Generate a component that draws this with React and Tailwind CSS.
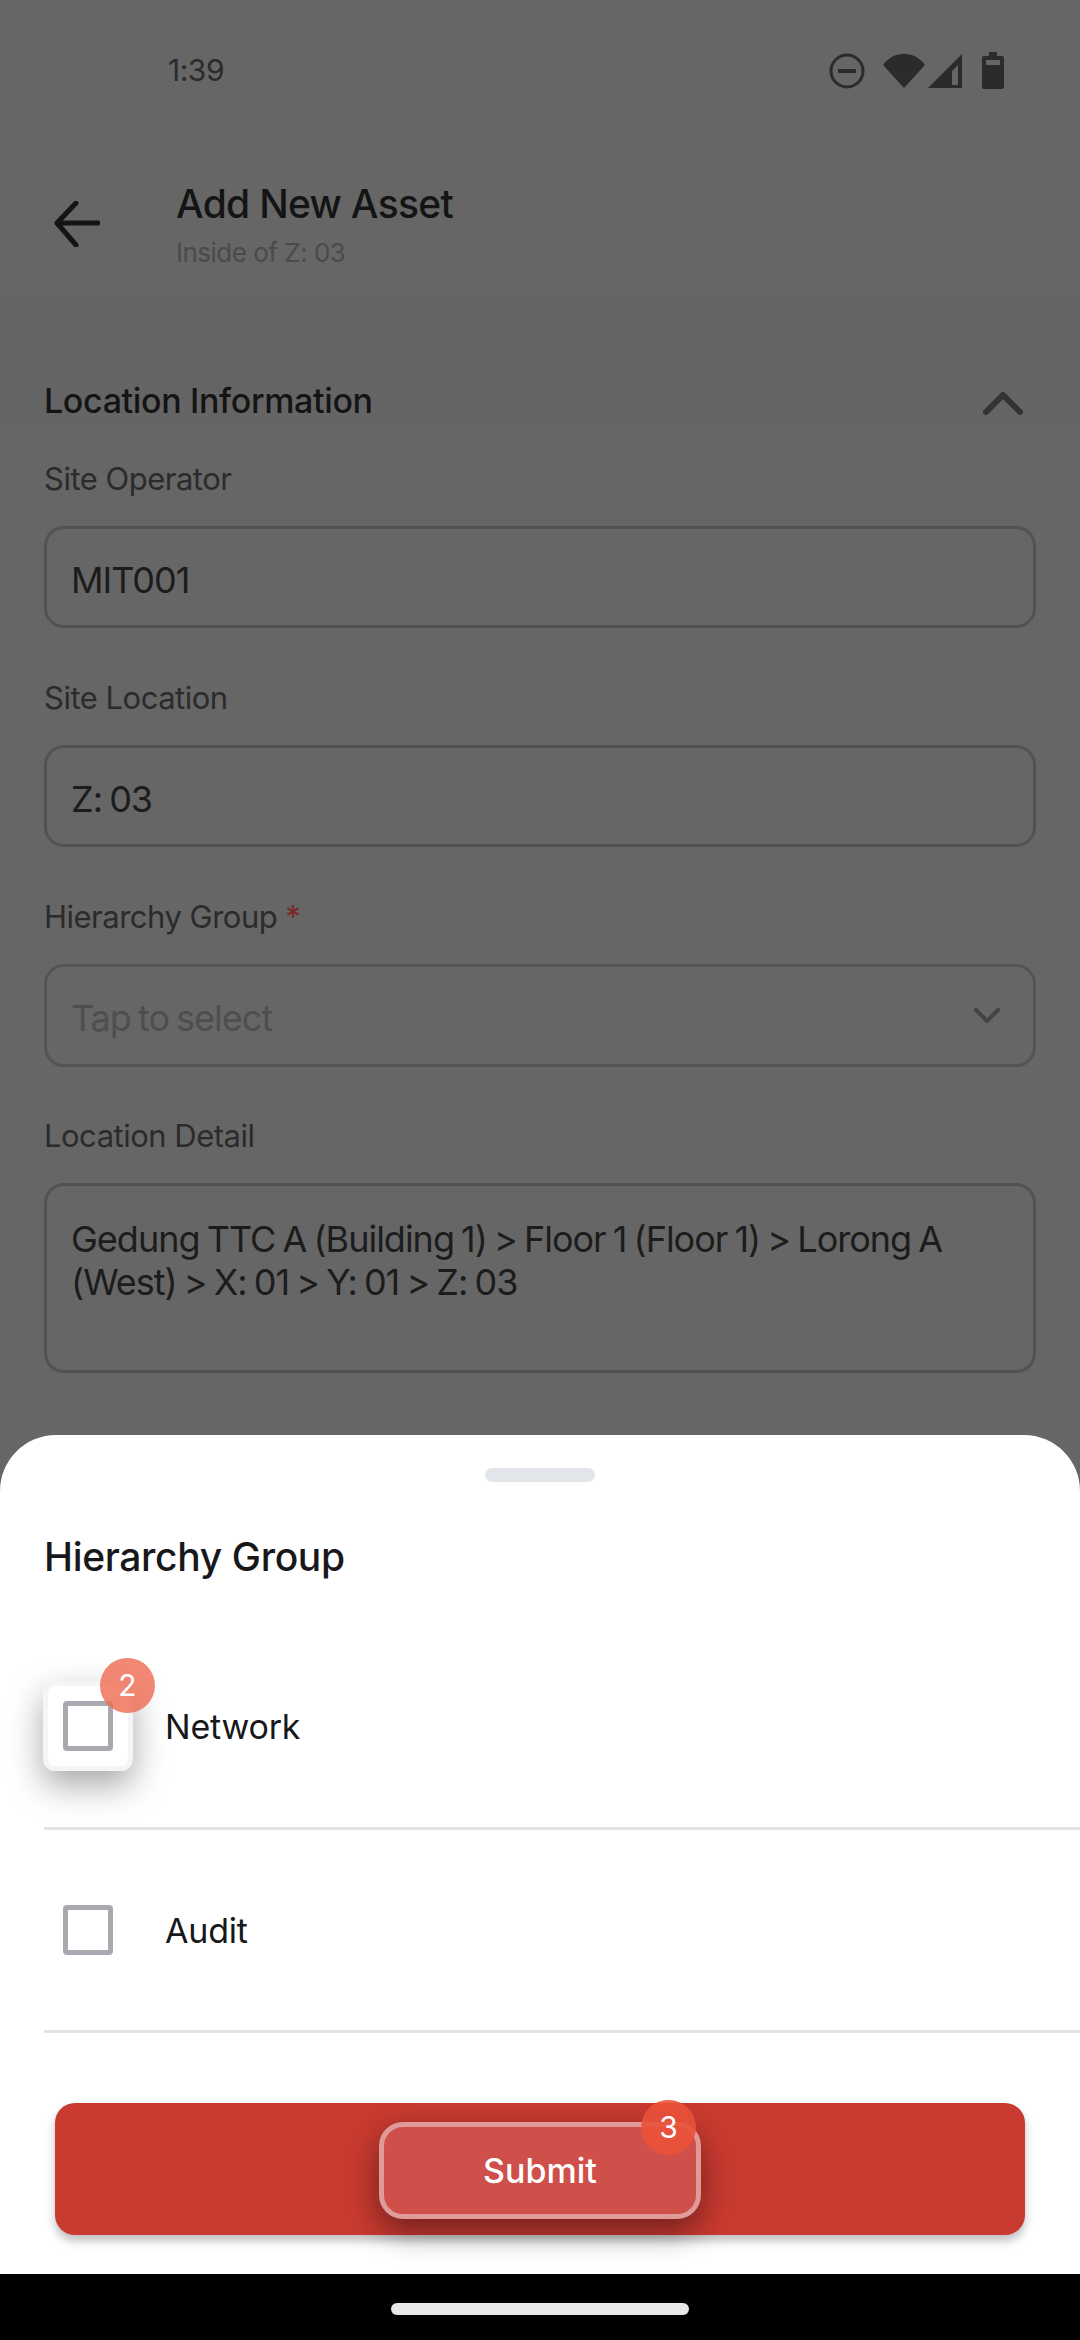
import React from "react";

const Label = ({ children, required }) => (
    <div className="h-[44px] flex items-center text-[31px] leading-none tracking-[-0.5px] text-[#2b2b2b]">
        {children}
        {required && <span className="ml-2 text-[#7a2a24]">*</span>}
    </div>
);

const Field = ({ label, value }) => (
    <div className="mb-[47px]">
        <Label>{label}</Label>
        <div className="mt-[26px] h-[102px] rounded-[20px] border-[3px] border-[#525252] px-[24px] pt-[5px] flex items-center text-[36px] tracking-[-1px] [word-spacing:-2px] text-[#1c1c1c]">
            {value}
        </div>
    </div>
);

function StatusBar() {
    return (
        <div className="h-[140px] pt-[1px] pl-[168px] pr-[76px] flex items-center justify-between">
            <span className="text-[30px] tracking-[-0.5px] text-[#2b2b2b]">1:39</span>
            <div className="flex items-center">
                <svg width="36" height="36" viewBox="0 0 36 36" className="mr-[18px]" fill="none" stroke="#2b2b2b" strokeWidth="3">
                    <circle cx="18" cy="18" r="16" />
                    <path d="M9 18h18" strokeWidth="4" />
                </svg>
                <svg width="42" height="36" viewBox="0 0 42 36" className="mr-[3px]" fill="#2b2b2b">
                    <path d="M0 12C11 -3 31 -3 42 12L21 35Z" />
                </svg>
                <svg width="35" height="36" viewBox="0 0 35 36" className="mr-[19px]" fill="#2b2b2b" fillRule="evenodd">
                    <path d="M34 1V35H0ZM30 12 24 18V32H30Z" />
                </svg>
                <svg width="22" height="37" viewBox="0 0 22 37" fill="#2b2b2b" fillRule="evenodd">
                    <path d="M7 0H15V4H20Q22 4 22 6V35Q22 37 20 37H2Q0 37 0 35V6Q0 4 2 4H7ZM4 8V13H18V8Z" />
                </svg>
            </div>
        </div>
    );
}

export default function App() {
    return (
        <div className="relative w-[1080px] h-[2340px] flex flex-col bg-[#666666] overflow-hidden font-['Inter',sans-serif]">
            <div className="h-[1435px] shrink-0 overflow-hidden bg-[linear-gradient(#666666_0px,#666666_280px,#636363_320px,#666666_480px)]">
                <StatusBar />

                {/* Header */}
                <div className="h-[160px] flex items-start">
                    <svg width="46" height="46" viewBox="0 0 46 46" className="ml-[54px] mt-[61px]" fill="none" stroke="#141414" strokeWidth="5" strokeLinecap="round" strokeLinejoin="round">
                        <path d="M44 22H3M22 2 3 22 22 44" />
                    </svg>
                    <div className="ml-[76px] mt-[42px]">
                        <div className="text-[39px] leading-[44px] font-medium tracking-[-0.7px] text-[#141414]">Add New Asset</div>
                        <div className="mt-[11px] text-[26px] leading-[32px] tracking-[-0.5px] text-[#4a4a4a]">Inside of Z: 03</div>
                    </div>
                </div>

                {/* Form */}
                <div className="px-[44px] pt-[73px]">
                    <div className="h-[54px] flex items-center justify-between">
                        <span className="text-[34px] font-medium tracking-[-0.35px] text-[#141414]">Location Information</span>
                        <svg width="40" height="24" viewBox="0 0 40 24" className="mr-[13px] mt-[6px]" fill="none" stroke="#333333" strokeWidth="6" strokeLinecap="round" strokeLinejoin="round">
                            <path d="M3 21 20 4 37 21" />
                        </svg>
                    </div>
                    <div className="mt-[29px]">
                        <Field label="Site Operator" value="MIT001" />
                        <Field label="Site Location" value="Z: 03" />
                    </div>
                    <div className="mb-[46px]">
                        <Label required>Hierarchy Group</Label>
                        <div className="mt-[26px] h-[103px] rounded-[20px] border-[3px] border-[#545454] px-[24px] flex items-center justify-between text-[36px] tracking-[-1px] [word-spacing:-2px] text-[#4e4e4e]">
                            <span className="mt-[5px]">Tap to select</span>
                            <svg width="28" height="16" viewBox="0 0 28 16" className="mr-[8px]" fill="none" stroke="#444444" strokeWidth="4" strokeLinecap="round" strokeLinejoin="round">
                                <path d="M3 2 14 13 25 2" />
                            </svg>
                        </div>
                    </div>
                    <Label>Location Detail</Label>
                    <div className="mt-[26px] h-[190px] rounded-[20px] border-[3px] border-[#525252] px-[24px] pt-[32px] text-[36px] leading-[43px] tracking-[-1px] [word-spacing:-2px] text-[#1c1c1c]">
                        Gedung TTC A (Building 1) &gt; Floor 1 (Floor 1) &gt; Lorong A (West) &gt; X: 01 &gt; Y: 01 &gt; Z: 03
                    </div>
                </div>
            </div>

            {/* Bottom sheet */}
            <div className="relative h-[839px] shrink-0 bg-white rounded-t-[56px]">
                <div className="pt-[33px] flex justify-center">
                    <div className="w-[110px] h-[14px] rounded-full bg-[#e2e6ea]" />
                </div>
                <div className="mt-[51px] pl-[44px] text-[39px] leading-[48px] font-medium tracking-[-0.35px] text-[#18181b]">Hierarchy Group</div>

                <div className="mt-[44px] pl-[44px]">
                    <div className="relative h-[205px] border-b-[3px] border-[#e2e3e5] flex items-center">
                        <div className="relative -ml-[1px] w-[90px] h-[90px] rounded-[12px] border-[5px] border-[#f5f5f6] bg-white shadow-[0_14px_34px_rgba(0,0,0,0.35)] flex items-center justify-center">
                            <div className="w-[50px] h-[50px] rounded-[4px] border-[5px] border-[#aaa9b0]" />
                            <div className="absolute -top-[28px] left-[52px] w-[55px] h-[55px] rounded-full bg-[#ef6a50]/80 flex items-center justify-center text-[30px] text-white">2</div>
                        </div>
                        <span className="ml-[32px] text-[34px] -tracking-[0.2px] text-[#18181b]">Network</span>
                    </div>
                    <div className="h-[203px] border-b-[3px] border-[#e2e3e5] flex items-center">
                        <div className="ml-[19px] w-[50px] h-[50px] rounded-[4px] border-[5px] border-[#aaa9b0]" />
                        <span className="ml-[52px] text-[34px] -tracking-[0.2px] text-[#18181b]">Audit</span>
                    </div>
                </div>

                <div className="relative mx-[55px] mt-[70px] h-[132px] rounded-[20px] bg-[#c93a30] shadow-[0_6px_10px_rgba(0,0,0,0.25)]">
                    <div className="absolute left-[324px] top-[19px] w-[322px] h-[97px] rounded-[24px] border-[5px] border-[#e09a98] bg-[#cf504a] shadow-[0_12px_32px_rgba(0,0,0,0.45)] flex items-center justify-center text-[34px] font-medium text-white">
                        Submit
                    </div>
                    <div className="absolute left-[586px] -top-[3px] w-[55px] h-[55px] rounded-full bg-[#ea5238]/90 flex items-center justify-center text-[30px] text-white">3</div>
                </div>
            </div>

            {/* Nav bar */}
            <div className="flex-1 bg-black flex justify-center pt-[29px]">
                <div className="w-[298px] h-[12px] rounded-full bg-[#e8e8e8]" />
            </div>
        </div>
    );
}
